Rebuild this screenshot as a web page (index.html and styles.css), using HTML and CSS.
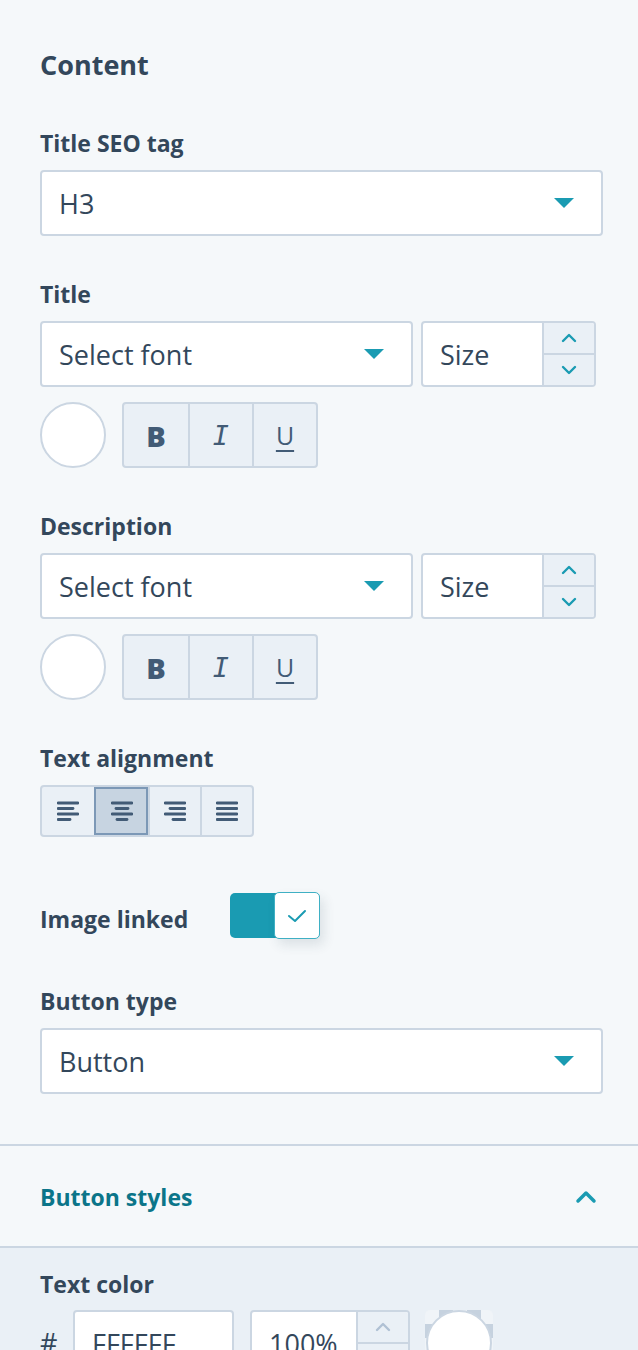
FILE: index.html
```html
<!DOCTYPE html>
<html lang="en">
<head>
    <meta charset="UTF-8">
    <meta name="viewport" content="width=device-width, initial-scale=1.0">
    <title>Module settings</title>
    <link rel="stylesheet" href="styles.css">
</head>
<body>
    <div class="panel">
        <h2 class="panel-title">Content</h2>

        <div class="field">
            <label>Title SEO tag</label>
            <div class="select">
                <span>H3</span>
                <span class="caret"></span>
            </div>
        </div>

        <div class="field">
            <label>Title</label>
            <div class="font-row">
                <div class="select">
                    <span>Select font</span>
                    <span class="caret"></span>
                </div>
                <div class="number-input">
                    <span class="number-value">Size</span>
                    <div class="stepper">
                        <span><svg width="16" height="10" viewBox="0 0 16 10"><polyline points="2,8 8,2 14,8" /></svg></span>
                        <span><svg width="16" height="10" viewBox="0 0 16 10"><polyline points="2,2 8,8 14,2" /></svg></span>
                    </div>
                </div>
            </div>
            <div class="style-row">
                <div class="swatch"></div>
                <div class="btn-group">
                    <button class="fmt fmt-bold">B</button>
                    <button class="fmt fmt-italic">I</button>
                    <button class="fmt fmt-underline">U</button>
                </div>
            </div>
        </div>

        <div class="field">
            <label>Description</label>
            <div class="font-row">
                <div class="select">
                    <span>Select font</span>
                    <span class="caret"></span>
                </div>
                <div class="number-input">
                    <span class="number-value">Size</span>
                    <div class="stepper">
                        <span><svg width="16" height="10" viewBox="0 0 16 10"><polyline points="2,8 8,2 14,8" /></svg></span>
                        <span><svg width="16" height="10" viewBox="0 0 16 10"><polyline points="2,2 8,8 14,2" /></svg></span>
                    </div>
                </div>
            </div>
            <div class="style-row">
                <div class="swatch"></div>
                <div class="btn-group">
                    <button class="fmt fmt-bold">B</button>
                    <button class="fmt fmt-italic">I</button>
                    <button class="fmt fmt-underline">U</button>
                </div>
            </div>
        </div>

        <div class="field">
            <label>Text alignment</label>
            <div class="align-group">
                <button class="align">
                    <svg width="22" height="20" viewBox="0 0 22 20"><line x1="1" y1="2" x2="21" y2="2"/><line x1="1" y1="7.5" x2="16" y2="7.5"/><line x1="1" y1="13" x2="21" y2="13"/><line x1="1" y1="18.5" x2="13" y2="18.5"/></svg>
                </button>
                <button class="align active">
                    <svg width="22" height="20" viewBox="0 0 22 20"><line x1="1" y1="2" x2="21" y2="2"/><line x1="5" y1="7.5" x2="17" y2="7.5"/><line x1="1" y1="13" x2="21" y2="13"/><line x1="6" y1="18.5" x2="16" y2="18.5"/></svg>
                </button>
                <button class="align">
                    <svg width="22" height="20" viewBox="0 0 22 20"><line x1="1" y1="2" x2="21" y2="2"/><line x1="6" y1="7.5" x2="21" y2="7.5"/><line x1="1" y1="13" x2="21" y2="13"/><line x1="9" y1="18.5" x2="21" y2="18.5"/></svg>
                </button>
                <button class="align">
                    <svg width="22" height="20" viewBox="0 0 22 20"><line x1="1" y1="2" x2="21" y2="2"/><line x1="1" y1="7.5" x2="21" y2="7.5"/><line x1="1" y1="13" x2="21" y2="13"/><line x1="1" y1="18.5" x2="21" y2="18.5"/></svg>
                </button>
            </div>
        </div>

        <div class="toggle-row">
            <span class="toggle-label">Image linked</span>
            <div class="toggle">
                <div class="toggle-knob">
                    <svg width="20" height="16" viewBox="0 0 20 16"><polyline points="2,8 8,13 18,3" /></svg>
                </div>
            </div>
        </div>

        <div class="field">
            <label>Button type</label>
            <div class="select">
                <span>Button</span>
                <span class="caret"></span>
            </div>
        </div>
    </div>

    <div class="accordion">
        <div class="accordion-header">
            <span>Button styles</span>
            <svg width="22" height="14" viewBox="0 0 22 14"><polyline points="3,11 11,3 19,11" /></svg>
        </div>
        <div class="accordion-body">
            <label>Text color</label>
            <div class="color-row">
                <span class="hash">#</span>
                <div class="hex-input">FFFFFF</div>
                <div class="number-input opacity">
                    <span class="number-value">100%</span>
                    <div class="stepper disabled">
                        <span><svg width="16" height="10" viewBox="0 0 16 10"><polyline points="2,8 8,2 14,8" /></svg></span>
                        <span><svg width="16" height="10" viewBox="0 0 16 10"><polyline points="2,2 8,8 14,2" /></svg></span>
                    </div>
                </div>
                <div class="color-preview"><div class="color-dot"></div></div>
            </div>
        </div>
    </div>
</body>
</html>
```

FILE: styles.css
```css
body {
    margin: 0;
    background-color: #f5f8fa;
    color: #33475b;
    font-family: "Open Sans", "Noto Sans", sans-serif;
}

.panel {
    padding: 47px 35px 50px 40px;
}

.panel-title {
    margin: 0 0 44px;
    font-size: 27px;
    line-height: 36px;
    font-weight: 700;
}

.field {
    margin-bottom: 42px;
}

.field:last-child {
    margin-bottom: 0;
}

label {
    display: block;
    font-size: 23px;
    line-height: 32px;
    font-weight: 700;
    margin-bottom: 11px;
}

.select {
    box-sizing: border-box;
    height: 66px;
    background-color: #fff;
    border: 2px solid #cbd6e2;
    border-radius: 4px;
    display: flex;
    align-items: center;
    justify-content: space-between;
    padding: 0 27px 0 17px;
    font-size: 27px;
}

.caret {
    width: 0;
    height: 0;
    border-left: 10px solid transparent;
    border-right: 10px solid transparent;
    border-top: 10px solid #1a9bb2;
}

.font-row {
    display: flex;
    gap: 8px;
}

.font-row .select {
    width: 373px;
}

.number-input {
    box-sizing: border-box;
    width: 175px;
    height: 66px;
    display: flex;
    background-color: #fff;
    border: 2px solid #cbd6e2;
    border-radius: 4px;
    overflow: hidden;
}

.number-value {
    flex: 1;
    display: flex;
    align-items: center;
    padding-left: 17px;
    font-size: 27px;
}

.stepper {
    width: 50px;
    display: flex;
    flex-direction: column;
    background-color: #eaf0f6;
    border-left: 2px solid #cbd6e2;
}

.stepper span {
    flex: 1;
    display: flex;
    align-items: center;
    justify-content: center;
}

.stepper span + span {
    border-top: 2px solid #cbd6e2;
}

.stepper svg polyline {
    fill: none;
    stroke: #1a9bb2;
    stroke-width: 2.4;
    stroke-linecap: round;
    stroke-linejoin: round;
}

.stepper.disabled svg polyline {
    stroke: #b0c1d4;
}

.style-row {
    display: flex;
    align-items: center;
    gap: 16px;
    margin-top: 15px;
}

.swatch {
    box-sizing: border-box;
    width: 66px;
    height: 66px;
    border-radius: 50%;
    border: 2px solid #cbd6e2;
    background-color: #fff;
}

.btn-group {
    display: flex;
    border: 2px solid #cbd6e2;
    border-radius: 4px;
    background-color: #eaf0f6;
    overflow: hidden;
}

.fmt {
    width: 64px;
    height: 62px;
    padding: 0;
    border: none;
    background: transparent;
    color: #425b76;
    font-size: 26px;
    cursor: pointer;
}

.fmt + .fmt {
    border-left: 2px solid #cbd6e2;
}

.fmt-bold {
    font-family: "Open Sans", sans-serif;
    font-weight: 800;
    font-size: 29px;
}

.fmt-italic {
    font-family: "DejaVu Sans Mono", monospace;
    font-style: italic;
    font-size: 27px;
}

.fmt-underline {
    font-family: "Open Sans", sans-serif;
    text-decoration: underline;
    text-decoration-thickness: 2px;
    text-underline-offset: 5px;
    font-size: 25px;
}

.align-group {
    display: inline-flex;
    border: 2px solid #cbd6e2;
    border-radius: 4px;
    background-color: #eaf0f6;
}

.align {
    box-sizing: border-box;
    width: 52px;
    height: 48px;
    padding: 0;
    border: none;
    background: transparent;
    display: flex;
    align-items: center;
    justify-content: center;
    cursor: pointer;
}

.align + .align {
    border-left: 2px solid #cbd6e2;
}

.align.active {
    width: 54px;
    background-color: #c7d4e1;
    outline: 2px solid #7c98b6;
    outline-offset: -2px;
}

.align svg line {
    stroke: #425b76;
    stroke-width: 2.8;
    stroke-linecap: round;
}

.toggle-row {
    display: flex;
    align-items: center;
    margin: 56px 0 47px;
}

.toggle-label {
    width: 190px;
    font-size: 23px;
    line-height: 32px;
    font-weight: 700;
    padding-top: 6px;
}

.toggle {
    position: relative;
    width: 90px;
    height: 45px;
    background-color: #1a9bb2;
    border-radius: 5px;
}

.toggle-knob {
    position: absolute;
    top: -1px;
    right: 0;
    box-sizing: border-box;
    width: 46px;
    height: 47px;
    background-color: #fff;
    border: 1.5px solid #3fb0c4;
    border-radius: 5px;
    display: flex;
    align-items: center;
    justify-content: center;
    box-shadow: 4px 6px 12px rgba(45, 62, 80, 0.12);
}

.toggle-knob svg polyline {
    fill: none;
    stroke: #1a9bb2;
    stroke-width: 2;
    stroke-linecap: round;
    stroke-linejoin: round;
}

.accordion {
    border-top: 2px solid #cbd6e2;
}

.accordion-header {
    height: 98px;
    display: flex;
    align-items: center;
    justify-content: space-between;
    padding: 2px 41px 0 40px;
    font-size: 23px;
    font-weight: 700;
    color: #0b7589;
    border-bottom: 2px solid #cbd6e2;
}

.accordion-header svg polyline {
    fill: none;
    stroke: #1a9bb2;
    stroke-width: 3.5;
    stroke-linecap: round;
    stroke-linejoin: round;
}

.accordion-body {
    background-color: #eaf0f6;
    padding: 20px 35px 40px 40px;
}

.accordion-body label {
    margin-bottom: 10px;
}

.color-row {
    display: flex;
    align-items: flex-start;
}

.hash {
    width: 33px;
    padding-top: 14px;
    font-size: 27px;
}

.hex-input {
    box-sizing: border-box;
    width: 161px;
    height: 66px;
    background-color: #fff;
    border: 2px solid #cbd6e2;
    border-radius: 4px;
    padding: 13px 0 0 17px;
    font-size: 27px;
}

.number-input.opacity {
    width: 160px;
    margin-left: 16px;
}

/* checkerboard behind the colour dot shows the transparency */
.color-preview {
    box-sizing: border-box;
    width: 68px;
    height: 66px;
    margin-left: 15px;
    border-radius: 5px;
    background-color: #f0f4f8;
    background-image: conic-gradient(#c6d2df 25%, #f0f4f8 25% 50%, #c6d2df 50% 75%, #f0f4f8 75%);
    background-size: 28px 28px;
    display: flex;
    justify-content: center;
}

.color-dot {
    box-sizing: border-box;
    width: 66px;
    height: 66px;
    border-radius: 50%;
    border: 2px solid #cbd6e2;
    background-color: #fff;
}
```
